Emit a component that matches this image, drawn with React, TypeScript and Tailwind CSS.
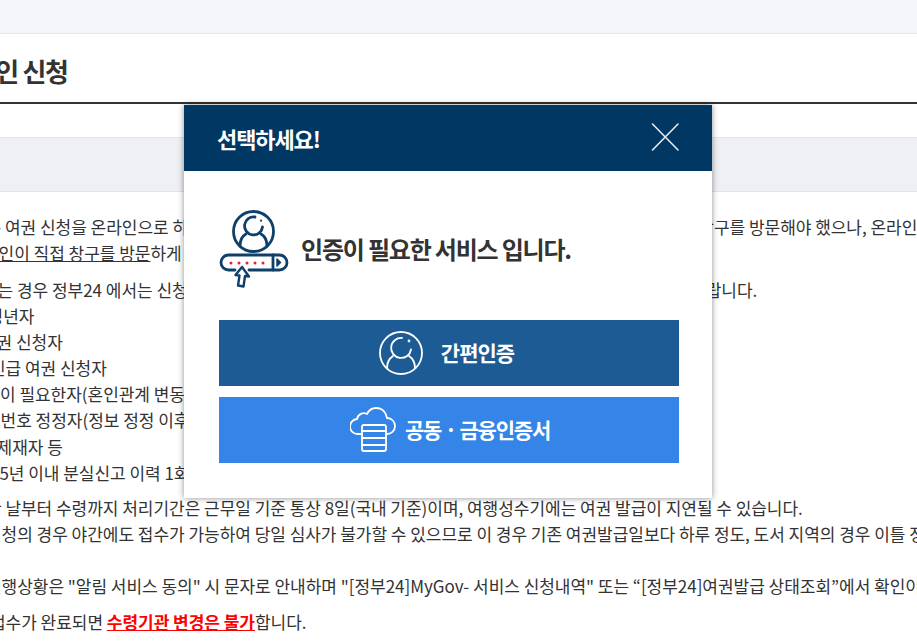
const F = "[font-family:'Noto_Sans_CJK_KR','Noto_Sans',sans-serif]";

function UserCircle({ size, color, sw }: { size: number; color: string; sw: number }) {
  return (
    <svg width={size} height={size} viewBox="0 0 44 44" fill="none" stroke={color} strokeWidth={sw} strokeLinecap="round">
      <circle cx="22" cy="22" r="21" />
      <path d="M23 7A10 10 0 1 0 32 18.500" />
      <circle cx="30" cy="10" r="0.500" />
      <path d="M14 25C9.500 28 8 32 8 37" />
      <path d="M30 25C34.500 28 36 32 36 37" />
    </svg>
  );
}

function AuthIcon() {
  return (
    <svg width="70" height="78" viewBox="0 0 70 78" fill="none" strokeLinecap="round" strokeLinejoin="round">
      <g stroke="#0f3f6b" strokeWidth="2.800">
        <circle cx="34.500" cy="21.500" r="20" />
        <path d="M36 7A9 9 0 1 0 43.500 17" />
        <path d="M27 24C22.500 26.500 21 30 21 36" />
        <path d="M42 24C46.500 26.500 48 30 48 36" />
        <path d="M28 45h32.500a7.500 7.500 0 0 1 0 15H30M16 60H9.500a7.500 7.500 0 0 1 0-15H28" />
        <path d="M54 45v15" />
      </g>
      <circle cx="42" cy="10.700" r="1.100" fill="#0f3f6b" />
      <path d="M58 49l3.500 3.500-3.500 3.500z" fill="#0f3f6b" stroke="#0f3f6b" strokeWidth="1.500" />
      <g fill="#e0243c">
        <circle cx="12" cy="53" r="1.500" />
        <circle cx="20" cy="53" r="1.500" />
        <circle cx="28" cy="53" r="1.500" />
        <circle cx="36" cy="53" r="1.500" />
        <circle cx="44" cy="53" r="1.500" />
      </g>
      <path d="M23 57l7 9.500-4-.500-1.500 10.500-5.500-1 1.500-10-4-.500z" fill="#fff" stroke="#0f3f6b" strokeWidth="2.400" />
    </svg>
  );
}

function CloudIcon() {
  return (
    <svg width="46" height="46" viewBox="0 0 46 46" fill="none" stroke="#fff" strokeWidth="1.800" strokeLinecap="round" strokeLinejoin="round">
      <path d="M11 27H8a7.500 7.500 0 0 1-1-15C8 7 13 5 17 7C19 3 23 1 26 1C32 1 36 5 37 11C42 11 45 15 45 19C45 24 41 27 37 27" />
      <rect x="12" y="18" width="24" height="26" rx="2" fill="#3584e8" />
      <path d="M12 24h24M12 31h24M12 38h24" />
    </svg>
  );
}

export default function App() {
  return (
    <div className={`relative h-[644px] w-[917px] overflow-hidden bg-white text-[17px] text-[#333] tracking-[-0.03px] ${F}`}>
      <div className="h-[34px] border-b border-[#e8e8ec] bg-[#f5f6fa]" />
      <div className="flex h-[70px] items-center border-b-2 border-[#333] pt-[4px]">
        <h1 className="ml-[-50px] whitespace-nowrap text-[26px] font-bold tracking-[-1.300px]">온라인 신청</h1>
      </div>
      <div className="mt-[33px] h-[55px] border-y border-[#e3e4ea] bg-[#eff0f4]" />
      <div className="mt-[22px] flex flex-col whitespace-nowrap leading-[26px]">
        <p className="ml-[-30px]">기존 여권 신청을 온라인으로 하실 수 있습니다. 기존에는 신청 및 수령 시 모두 본인이 여권 민원실 등 직접 창구를 방문해야 했으나, 온라인</p>
        <p className="ml-[-17px]"><span className="underline">본인이 직접 창구를 방문</span>하게 됩니다.</p>
        <p className="ml-[-18px] mt-[11px]">하는 경우 정부24 에서는 신청이 불가하므로 아래에 해당하시는 분은 <span className="mr-[12px]">꼭</span> 직접 창구를 방문하여 주시기 바랍니다.</p>
        <p className="ml-[-28px]">미성년자</p>
        <p className="ml-[-19px]">여권 신청자</p>
        <p className="ml-[-10px]">긴급 여권 신청자</p>
        <p className="ml-0">이 필요한자(혼인관계 변동으로 인한</p>
        <p className="ml-[-15px]">민번호 정정자(정보 정정 이후</p>
        <p className="ml-[-19px] mt-[1px]">복제재자 등</p>
        <p className="ml-[-10px]">15년 이내 분실신고 이력 1회 이상</p>
        <p className="ml-[-14px] mt-[9px]">한 날부터 수령까지 처리기간은 근무일 기준 통상 8일(국내 기준)이며, 여행성수기에는 여권 발급이 지연될 수 있습니다.</p>
        <p className="ml-[-14px]">신청의 경우 야간에도 접수가 가능하여 당일 심사가 불가할 수 있으므로 이 경우 기존 여권발급일보다 하루 정도, 도서 지역의 경우 이틀 정도</p>
        <p className="ml-[-14px] mt-[26px]">진행상황은 "알림 서비스 동의" 시 문자로 안내하며 "[정부24]MyGov- 서비스 신청내역" 또는 “[정부24]여권발급 상태조회”에서 확인이</p>
        <p className="ml-[-10px] mt-[10px]">접수가 완료되면 <span className="font-bold text-[#f00] underline">수령기관 변경은 불가</span>합니다.</p>
      </div>

      <div className="absolute left-[184px] top-[105px] w-[528px] bg-white shadow-[0_0_6px_rgba(0,0,0,0.45)]">
        <div className="flex h-[66px] items-center justify-between bg-[#003763] pl-[33px] pr-[33px]">
          <span className="text-[22px] font-bold tracking-[-1.100px] text-white">선택하세요!</span>
          <svg width="30" height="30" viewBox="0 0 30 30" stroke="#e6ebef" strokeWidth="1.600" strokeLinecap="round">
            <path d="M3.500 1L29 27M29 1L3.500 27" />
          </svg>
        </div>
        <div className="pl-[35px] pr-[33px] pb-[35px]">
          <div className="flex h-[149px] items-center gap-[12px] pt-[6px]">
            <AuthIcon />
            <span className="text-[24px] font-bold tracking-[-1.200px] text-[#333]">인증이 필요한 서비스 입니다.</span>
          </div>
          <div className="flex h-[66px] items-center justify-center gap-[18px] bg-[#1c5b94] pr-[5px] text-white">
            <UserCircle size={44} color="#fff" sw={1.800} />
            <span className="text-[21px] font-bold tracking-[-1px]">간편인증</span>
          </div>
          <div className="mt-[11px] flex h-[66px] items-center justify-center gap-[9px] bg-[#3584e8] pl-[2px] text-white">
            <CloudIcon />
            <span className="text-[21px] font-bold tracking-[-1.200px]">공동 · 금융인증서</span>
          </div>
        </div>
      </div>
    </div>
  );
}
